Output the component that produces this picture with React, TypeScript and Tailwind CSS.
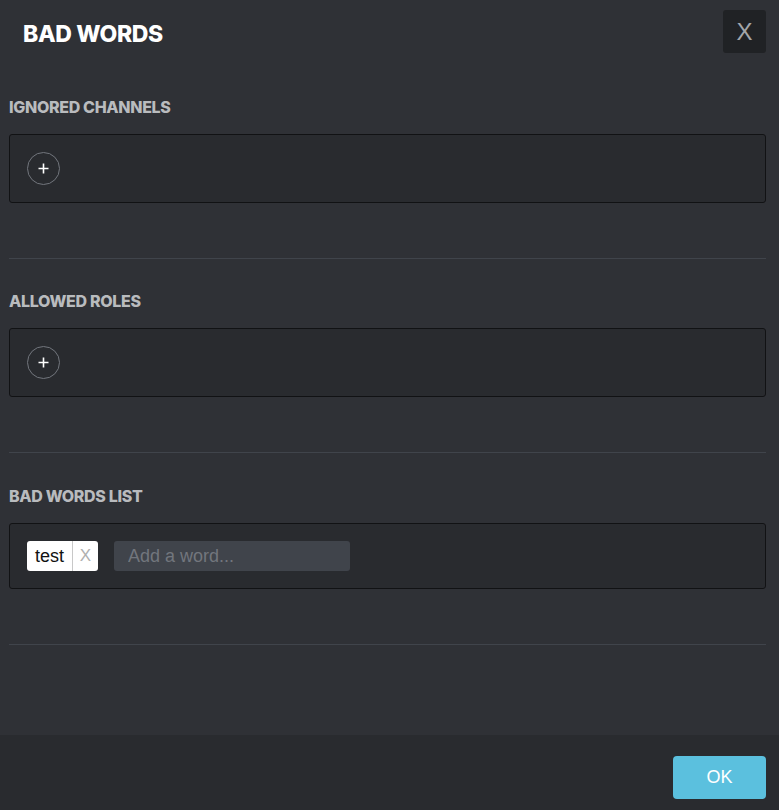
import React from "react";

const headFont = { fontFamily: "Inter, 'Open Sans', sans-serif" };

const PlusButton: React.FC = () => (
  <button className="w-[33px] h-[33px] rounded-full border border-[#72767d] flex items-center justify-center text-white">
    <svg width="11" height="11" viewBox="0 0 11 11">
      <path d="M5.5 0.5v10M0.5 5.5h10" stroke="#fff" strokeWidth="1.6" />
    </svg>
  </button>
);

const Section: React.FC<{ title: string; children: React.ReactNode; extraTop?: boolean }> = ({
  title,
  children,
  extraTop,
}) => (
  <div className={`${extraTop ? "pt-[33px]" : "pt-[32px]"} pb-[55px] border-b border-[#40444b]`}>
    <h3
      className="h-[20px] leading-[20px] text-[16px] font-extrabold tracking-[-0.02em] text-[#b9bbbe] uppercase mb-[17px]"
      style={headFont}
    >
      {title}
    </h3>
    <div className="bg-[#292b2f] border border-[#111214] rounded-[3px] p-[17px] flex items-center gap-4">
      {children}
    </div>
  </div>
);

export default function App() {
  return (
    <div
      className="w-[779px] h-[810px] bg-[#2f3136] flex flex-col"
      style={{ fontFamily: "'Liberation Sans', Arial, sans-serif" }}
    >
      <div className="flex-1">
        <div className="h-[65px] pt-[10px] pl-[23px] pr-[13px] flex items-start justify-between">
          <h1
            className="h-[43px] pt-[3px] leading-[43px] text-[23px] font-extrabold tracking-[-0.015em] text-white"
            style={headFont}
          >
            BAD WORDS
          </h1>
          <button className="w-[43px] h-[43px] bg-[#202225] rounded-[3px] text-[#a3a6aa] text-[24px] flex items-center justify-center">
            X
          </button>
        </div>

        <div className="pl-[9px] pr-[13px]">
          <Section title="Ignored Channels">
            <PlusButton />
          </Section>
          <Section title="Allowed Roles">
            <PlusButton />
          </Section>
          <Section title="Bad Words List" extraTop>
            <div className="h-[30px] w-[71px] bg-white rounded-[3px] flex items-center">
              <span className="w-[45px] pl-[8px] text-[18px] text-[#111] leading-[30px]">test</span>
              <span className="flex-1 h-full border-l border-[#c8c8c8] text-center text-[17px] font-light text-[#b0b0b0] leading-[30px]">
                X
              </span>
            </div>
            <input
              className="w-[236px] h-[30px] bg-[#40444b] rounded-[3px] px-[14px] text-[18px] text-white placeholder-[#72767d] outline-none"
              placeholder="Add a word..."
            />
          </Section>
        </div>
      </div>

      <div className="h-[75px] bg-[#292b2f] pt-[21px] pr-[13px] flex justify-end items-start">
        <button className="w-[93px] h-[43px] bg-[#5bc0de] rounded-[4px] text-white text-[18px]">
          OK
        </button>
      </div>
    </div>
  );
}
